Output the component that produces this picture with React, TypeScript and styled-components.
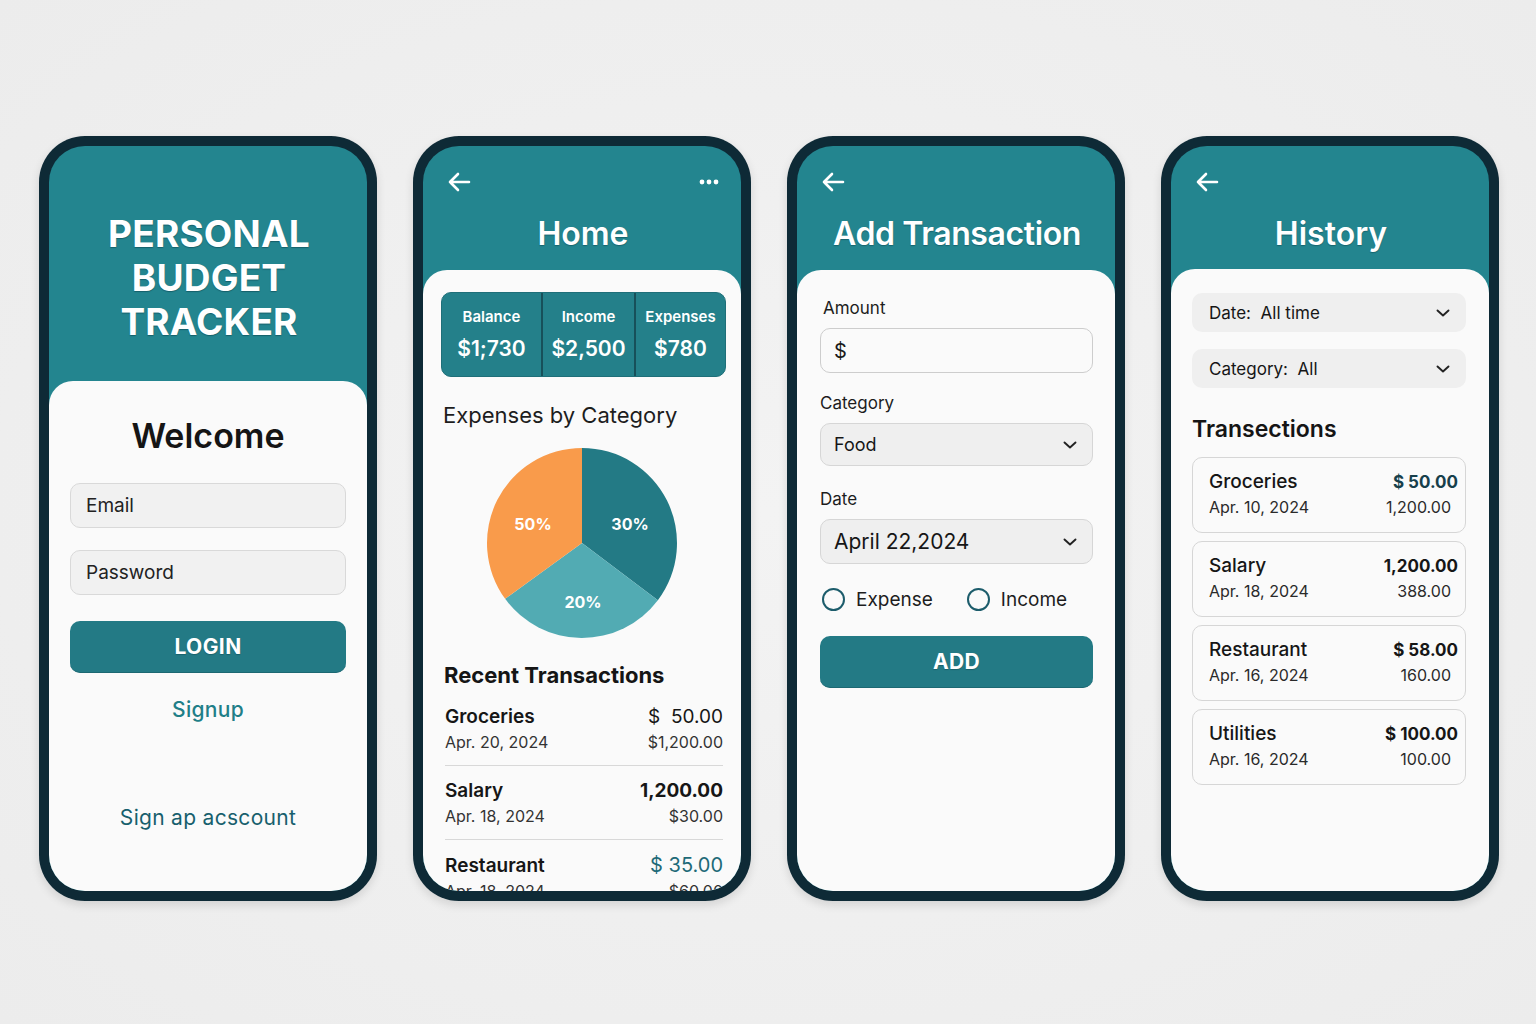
import React from 'react';
import styled, { createGlobalStyle } from 'styled-components';

const teal = '#23858f';
const tealDark = '#237a85';
const frame = '#0e2a36';
const ink = '#1a1a1a';

const GlobalStyle = createGlobalStyle`
  html, body {
    margin: 0;
    padding: 0;
    background: #efefef;
  }
  body {
    font-family: Inter, 'Noto Sans', 'Liberation Sans', sans-serif;
    color: ${ink};
  }
  * {
    box-sizing: border-box;
  }
`;

const BackArrow = () => (
  <svg width="24" height="20" viewBox="0 0 24 20" fill="none">
    <path d="M22 10H3M11 2L3 10L11 18" stroke="#fff" strokeWidth="2.6" strokeLinecap="round" strokeLinejoin="round" />
  </svg>
);

const Dots = () => (
  <svg width="20" height="6" viewBox="0 0 20 6">
    <circle cx="3" cy="3" r="2.4" fill="#fff" />
    <circle cx="10" cy="3" r="2.4" fill="#fff" />
    <circle cx="17" cy="3" r="2.4" fill="#fff" />
  </svg>
);

const Chevron = () => (
  <svg width="14" height="8" viewBox="0 0 14 8" fill="none">
    <path d="M1.5 1.5L7 6.5L12.5 1.5" stroke="#222" strokeWidth="1.9" strokeLinecap="round" strokeLinejoin="round" />
  </svg>
);

const recent = [
  { name: 'Groceries', date: 'Apr. 20, 2024', amount: '$  50.00', sub: '$1,200.00', strong: false, accent: false },
  { name: 'Salary', date: 'Apr. 18, 2024', amount: '1,200.00', sub: '$30.00', strong: true, accent: false },
  { name: 'Restaurant', date: 'Apr. 18, 2024', amount: '$ 35.00', sub: '$60.00', strong: false, accent: true },
];

const history = [
  { name: 'Groceries', date: 'Apr. 10, 2024', amount: '$ 50.00', sub: '1,200.00', accent: true },
  { name: 'Salary', date: 'Apr. 18, 2024', amount: '1,200.00', sub: '388.00', accent: false },
  { name: 'Restaurant', date: 'Apr. 16, 2024', amount: '$ 58.00', sub: '160.00', accent: false },
  { name: 'Utilities', date: 'Apr. 16, 2024', amount: '$ 100.00', sub: '100.00', accent: false },
];

const LoginScreen = () => (
  <Screen>
    <Header $height={235}>
      <Brand>
        PERSONAL
        <br />
        BUDGET
        <br />
        TRACKER
      </Brand>
    </Header>
    <Sheet $pad="35px 21px 0">
      <Welcome>Welcome</Welcome>
      <TextBox $top={27}>Email</TextBox>
      <TextBox $top={22}>Password</TextBox>
      <PrimaryButton $top={26}>LOGIN</PrimaryButton>
      <LinkText $top={24} $color="#1f7f88">Signup</LinkText>
      <LinkText $top={82} $color="#175f6d" $weight={400}>
        Sign ap acscount
      </LinkText>
    </Sheet>
  </Screen>
);

const HomeScreen = () => (
  <Screen>
    <Header $height={124}>
      <TopBar>
        <BackArrow />
        <Dots />
      </TopBar>
      <Title>Home</Title>
    </Header>
    <Sheet $pad="22px 15px 0 18px">
      <Stats>
        <StatCell>
          <StatLabel>Balance</StatLabel>
          <StatValue>$1;730</StatValue>
        </StatCell>
        <StatCell>
          <StatLabel>Income</StatLabel>
          <StatValue>$2,500</StatValue>
        </StatCell>
        <StatCell>
          <StatLabel>Expenses</StatLabel>
          <StatValue>$780</StatValue>
        </StatCell>
      </Stats>
      <SectionHeading>Expenses by Category</SectionHeading>
      <PieWrap>
        <svg width="200" height="200" viewBox="0 0 200 200">
          <path d="M100 100L100 5A95 95 0 0 1 175.87 157.17Z" fill="#237a85" />
          <path d="M100 100L175.87 157.17A95 95 0 0 1 23.15 155.84Z" fill="#52abb3" />
          <path d="M100 100L23.15 155.84A95 95 0 0 1 100 5Z" fill="#f99b4b" />
          <PieLabel x="51" y="87">50%</PieLabel>
          <PieLabel x="148" y="87">30%</PieLabel>
          <PieLabel x="101" y="165">20%</PieLabel>
        </svg>
      </PieWrap>
      <RecentHeading>Recent Transactions</RecentHeading>
      <RecentList>
        {recent.map((r) => (
          <RecentRow key={r.name}>
            <RowLine>
              <RowName>{r.name}</RowName>
              <RowAmount $strong={r.strong} $accent={r.accent}>
                {r.amount}
              </RowAmount>
            </RowLine>
            <RowLine>
              <RowDate>{r.date}</RowDate>
              <RowDate>{r.sub}</RowDate>
            </RowLine>
          </RecentRow>
        ))}
      </RecentList>
    </Sheet>
  </Screen>
);

const AddScreen = () => (
  <Screen>
    <Header $height={124}>
      <TopBar>
        <BackArrow />
      </TopBar>
      <Title $tight>Add Transaction</Title>
    </Header>
    <Sheet $pad="27px 22px 0 23px">
      <FieldLabel $top={0} $indent={3}>
        Amount
      </FieldLabel>
      <AmountBox>$</AmountBox>
      <FieldLabel $top={19}>Category</FieldLabel>
      <Select $height={43} $size={18}>
        <span>Food</span>
        <Chevron />
      </Select>
      <FieldLabel $top={22}>Date</FieldLabel>
      <Select $height={45} $size={21}>
        <span>April 22,2024</span>
        <Chevron />
      </Select>
      <RadioRow>
        <RadioItem>
          <RadioCircle />
          Expense
        </RadioItem>
        <RadioItem>
          <RadioCircle />
          Income
        </RadioItem>
      </RadioRow>
      <PrimaryButton $top={25}>ADD</PrimaryButton>
    </Sheet>
  </Screen>
);

const HistoryScreen = () => (
  <Screen>
    <Header $height={123}>
      <TopBar>
        <BackArrow />
      </TopBar>
      <Title>History</Title>
    </Header>
    <Sheet $pad="24px 23px 0 21px">
      <Filter>
        <span>Date:  All time</span>
        <Chevron />
      </Filter>
      <Filter $top={17}>
        <span>Category:  All</span>
        <Chevron />
      </Filter>
      <TxHeading>Transections</TxHeading>
      <TxList>
        {history.map((t) => (
          <TxCard key={t.name}>
            <RowLine>
              <TxName>{t.name}</TxName>
              <TxAmount $accent={t.accent}>{t.amount}</TxAmount>
            </RowLine>
            <RowLine>
              <TxDate>{t.date}</TxDate>
              <TxSub>{t.sub}</TxSub>
            </RowLine>
          </TxCard>
        ))}
      </TxList>
    </Sheet>
  </Screen>
);

const App: React.FC = () => (
  <>
    <GlobalStyle />
    <Page>
      <Phone>
        <LoginScreen />
      </Phone>
      <Phone>
        <HomeScreen />
      </Phone>
      <Phone>
        <AddScreen />
      </Phone>
      <Phone>
        <HistoryScreen />
      </Phone>
    </Page>
  </>
);

export default App;

const Page = styled.div`
  min-height: 100vh;
  display: flex;
  justify-content: center;
  align-items: flex-start;
  gap: 36px;
  padding-top: 136px;
  padding-left: 2px;
  background: radial-gradient(ellipse at center, #f3f3f3 0%, #ececec 100%);
`;

const Phone = styled.div`
  width: 338px;
  height: 765px;
  padding: 10px;
  background: ${frame};
  border-radius: 46px;
  box-shadow: 0 4px 10px rgba(0, 0, 0, 0.12);
`;

const Screen = styled.div`
  height: 100%;
  border-radius: 36px;
  overflow: hidden;
  background: ${teal};
  display: flex;
  flex-direction: column;
`;

const Header = styled.div<{ $height: number }>`
  flex: 0 0 ${(p) => p.$height}px;
  padding: 26px 22px 0 24px;
  display: flex;
  flex-direction: column;
  color: #fff;
`;

const TopBar = styled.div`
  height: 20px;
  display: flex;
  align-items: center;
  justify-content: space-between;
`;

const Title = styled.h1<{ $tight?: boolean }>`
  margin: 22px 0 0;
  font-size: 32px;
  line-height: 40px;
  font-weight: 600;
  text-align: center;
  letter-spacing: ${(p) => (p.$tight ? '-0.4px' : '0')};
  text-shadow: 0 1px 1px rgba(0, 40, 50, 0.35);
`;

const Brand = styled.h1`
  margin: 40px 0 0;
  font-size: 37px;
  line-height: 44px;
  font-weight: 700;
  text-align: center;
  letter-spacing: 0.2px;
  text-shadow: 0 1px 1px rgba(0, 40, 50, 0.4);
`;

const Sheet = styled.div<{ $pad: string }>`
  flex: 1;
  background: #fafafa;
  border-radius: 24px 24px 0 0;
  padding: ${(p) => p.$pad};
  display: flex;
  flex-direction: column;
`;

const Welcome = styled.h2`
  margin: 0;
  font-size: 34px;
  line-height: 40px;
  font-weight: 600;
  text-align: center;
  color: #151515;
`;

const TextBox = styled.div<{ $top: number }>`
  margin-top: ${(p) => p.$top}px;
  height: 45px;
  display: flex;
  align-items: center;
  padding-left: 15px;
  background: #f1f1f1;
  border: 1px solid #d9d9d9;
  border-radius: 10px;
  font-size: 19px;
  color: #222;
`;

const PrimaryButton = styled.button<{ $top: number }>`
  margin-top: ${(p) => p.$top}px;
  height: 52px;
  width: 100%;
  border: none;
  border-bottom: 1.5px solid #1c6872;
  border-radius: 10px;
  background: ${tealDark};
  color: #fff;
  font-family: inherit;
  font-size: 21px;
  font-weight: 700;
  letter-spacing: 0.4px;
  text-shadow: 0 1px 1px rgba(0, 40, 50, 0.3);
`;

const LinkText = styled.div<{ $top: number; $color: string; $weight?: number }>`
  margin-top: ${(p) => p.$top}px;
  text-align: center;
  font-size: 21px;
  line-height: 26px;
  font-weight: ${(p) => p.$weight ?? 500};
  letter-spacing: 0.3px;
  color: ${(p) => p.$color};
`;

const Stats = styled.div`
  height: 85px;
  display: grid;
  grid-template-columns: 99px 93px 1fr;
  background: #24808a;
  border: 1px solid #1f6f79;
  border-radius: 10px;
  color: #fff;
`;

const StatCell = styled.div`
  display: flex;
  flex-direction: column;
  align-items: center;
  padding-top: 14px;
  & + & {
    border-left: 2px solid #17505a;
  }
`;

const StatLabel = styled.div`
  font-size: 15px;
  line-height: 20px;
  font-weight: 600;
`;

const StatValue = styled.div`
  margin-top: 8px;
  font-size: 21px;
  line-height: 28px;
  font-weight: 600;
`;

const SectionHeading = styled.h3`
  margin: 24px 0 0 2px;
  font-size: 22px;
  line-height: 28px;
  font-weight: 400;
  color: #1d1d1d;
`;

const PieWrap = styled.div`
  margin-top: 14px;
  display: flex;
  justify-content: center;
  padding-right: 4px;
`;

const PieLabel = styled.text`
  fill: #fff;
  font-size: 16px;
  font-weight: 700;
  text-anchor: middle;
  font-family: Inter, sans-serif;
`;

const RecentHeading = styled.h3`
  margin: 18px 0 0 3px;
  font-size: 22px;
  line-height: 28px;
  font-weight: 700;
  color: #151515;
`;

const RecentList = styled.div`
  margin: 3px 3px 0 4px;
`;

const RecentRow = styled.div`
  padding: 13px 0 12px;
  border-bottom: 1.5px solid #d8d8d8;
  &:last-child {
    border-bottom: none;
  }
`;

const RowLine = styled.div`
  display: flex;
  justify-content: space-between;
  align-items: baseline;
  & + & {
    margin-top: 2px;
  }
`;

const RowName = styled.span`
  font-size: 19px;
  line-height: 24px;
  font-weight: 600;
  color: #161616;
`;

const RowAmount = styled.span<{ $strong: boolean; $accent: boolean }>`
  white-space: pre;
  font-size: ${(p) => (p.$accent ? 20 : 19)}px;
  line-height: 24px;
  font-weight: ${(p) => (p.$strong ? 700 : 400)};
  color: ${(p) => (p.$accent ? '#1e6a78' : '#161616')};
`;

const RowDate = styled.span`
  font-size: 16px;
  line-height: 22px;
  color: #333;
`;

const FieldLabel = styled.div<{ $top: number; $indent?: number }>`
  margin-top: ${(p) => p.$top}px;
  padding-left: ${(p) => p.$indent ?? 0}px;
  font-size: 17px;
  line-height: 22px;
  color: #1d1d1d;
  margin-bottom: 9px;
`;

const AmountBox = styled.div`
  height: 45px;
  display: flex;
  align-items: center;
  padding-left: 13px;
  background: #fafafa;
  border: 1px solid #cdcdcd;
  border-radius: 10px;
  font-size: 20px;
`;

const Select = styled.div<{ $height: number; $size: number }>`
  height: ${(p) => p.$height}px;
  display: flex;
  align-items: center;
  justify-content: space-between;
  padding: 0 15px 0 13px;
  background: #efefef;
  border: 1px solid #d6d6d6;
  border-radius: 10px;
  font-size: ${(p) => p.$size}px;
  color: #161616;
`;

const RadioRow = styled.div`
  margin-top: 24px;
  display: flex;
  align-items: center;
  gap: 34px;
  padding-left: 2px;
`;

const RadioItem = styled.label`
  display: flex;
  align-items: center;
  gap: 11px;
  font-size: 19px;
  color: #1d1d1d;
`;

const RadioCircle = styled.span`
  width: 23px;
  height: 23px;
  border-radius: 50%;
  border: 2.5px solid #1c5c6b;
`;

const Filter = styled.div<{ $top?: number }>`
  margin-top: ${(p) => p.$top ?? 0}px;
  height: 39px;
  display: flex;
  align-items: center;
  justify-content: space-between;
  padding: 0 16px 0 17px;
  background: #efefef;
  border-radius: 10px;
  font-size: 17px;
  color: #161616;
  white-space: pre;
`;

const TxHeading = styled.h3`
  margin: 27px 0 0;
  font-size: 23px;
  line-height: 28px;
  font-weight: 600;
  color: #151515;
`;

const TxList = styled.div`
  margin-top: 14px;
  display: flex;
  flex-direction: column;
  gap: 8px;
`;

const TxCard = styled.div`
  height: 76px;
  padding: 12px 7px 0 16px;
  background: #fafafa;
  border: 1px solid #d6d6d6;
  border-radius: 10px;
`;

const TxName = styled.span`
  font-size: 19px;
  line-height: 24px;
  font-weight: 500;
  color: #161616;
`;

const TxAmount = styled.span<{ $accent: boolean }>`
  white-space: pre;
  font-size: 17px;
  line-height: 24px;
  font-weight: 700;
  color: ${(p) => (p.$accent ? '#173f4b' : '#161616')};
`;

const TxDate = styled.span`
  font-size: 16px;
  line-height: 22px;
  color: #2a2a2a;
`;

const TxSub = styled.span`
  font-size: 16px;
  line-height: 22px;
  color: #2a2a2a;
  margin-right: 7px;
`;
